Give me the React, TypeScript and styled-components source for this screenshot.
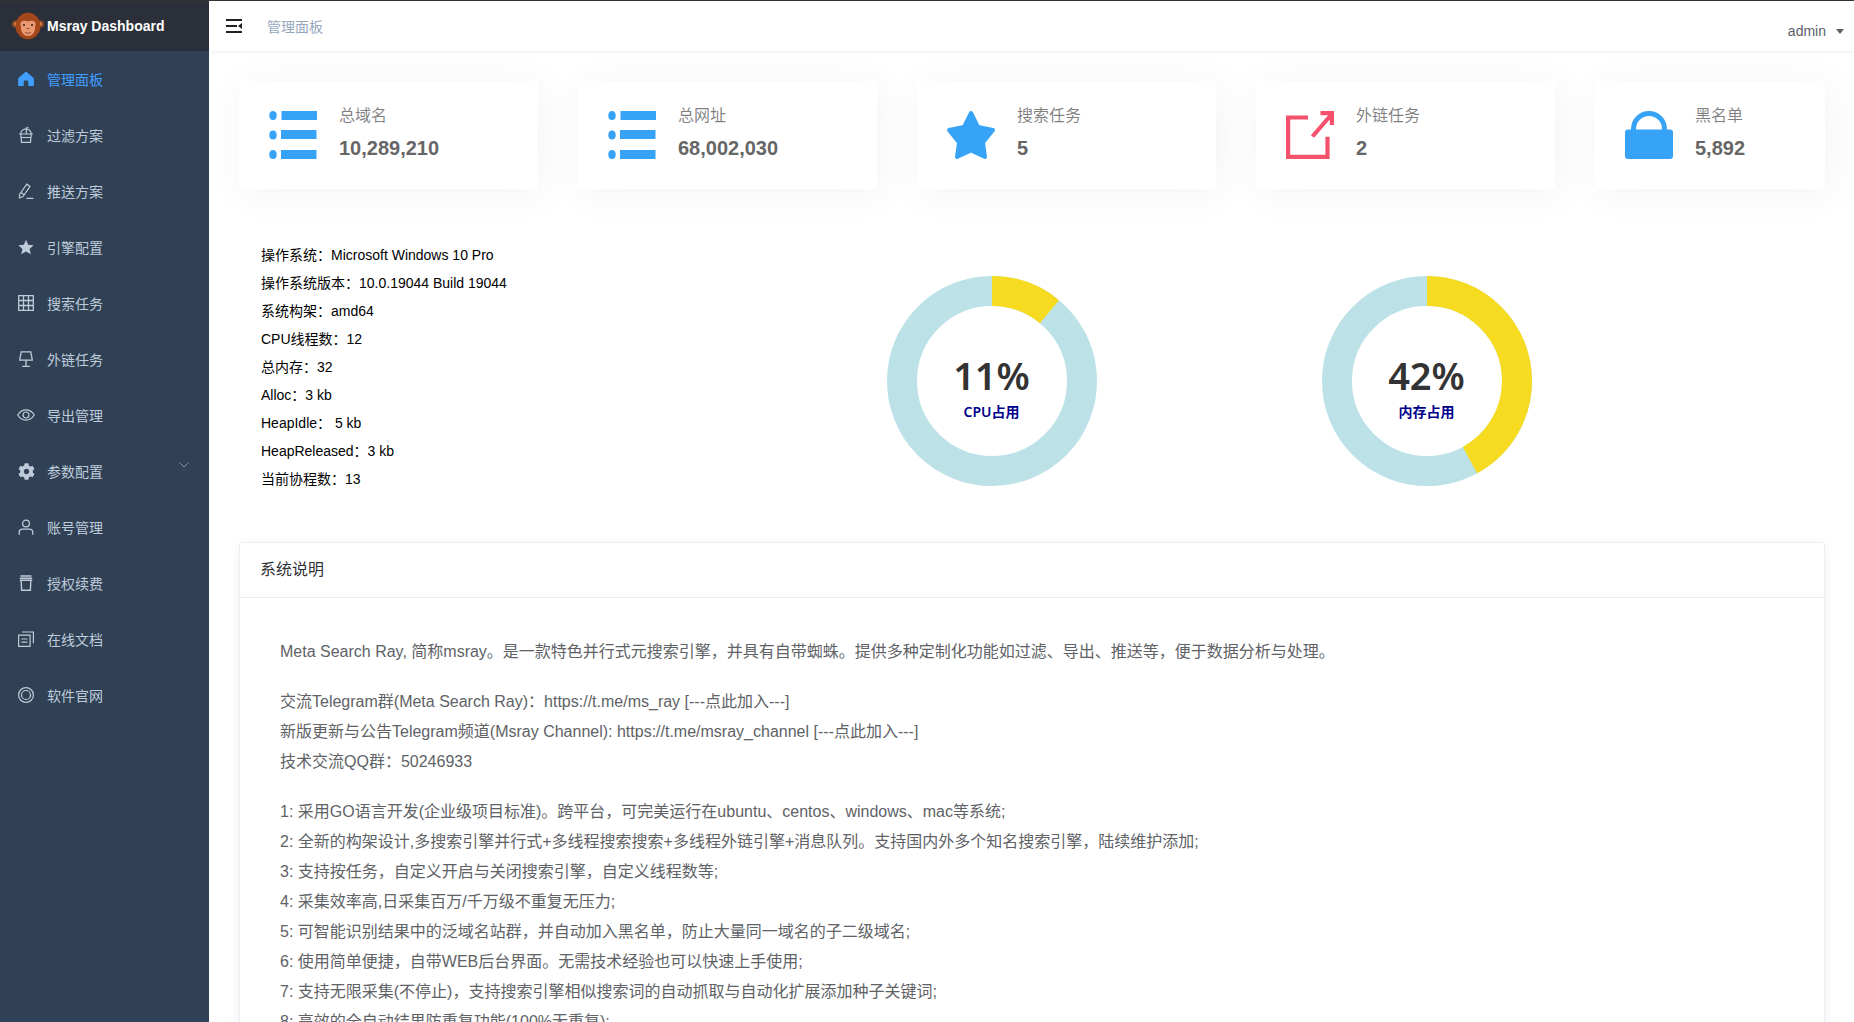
import React from "react";
import styled, { createGlobalStyle } from "styled-components";
import { FaCog } from "react-icons/fa";

const GlobalStyle = createGlobalStyle`
  html, body {
    margin: 0;
    height: 100%;
    overflow: hidden;
    background: #fff;
    font-family: "Liberation Sans", "Noto Sans CJK SC", sans-serif;
  }
  * { box-sizing: border-box; }
`;

// Layout
const Page = styled.div`
  display: flex;
  height: 100vh;
  overflow: hidden;
  border-top: 1px solid #333;
`;

const Sidebar = styled.aside`
  width: 209px;
  flex: none;
  background: #304156;
`;

const LogoBar = styled.div`
  height: 50px;
  display: flex;
  align-items: center;
  gap: 3px;
  padding-left: 12px;
  background: #2b2f3a;
`;

const LogoTitle = styled.span`
  color: #fff;
  font-size: 14px;
  font-weight: 700;
`;

const Menu = styled.nav``;

const MenuItem = styled.div<{ $active?: boolean }>`
  height: 56px;
  display: flex;
  align-items: center;
  gap: 13px;
  padding-left: 18px;
  padding-right: 20px;
  font-size: 14px;
  color: ${(p) => (p.$active ? "#409eff" : "#bfcbd9")};
`;

const MenuIcon = styled.span`
  width: 16px;
  height: 16px;
  display: flex;
  align-items: center;
  justify-content: center;
  color: inherit;
  svg {
    display: block;
    overflow: visible;
  }
`;

const MenuLabel = styled.span`
  flex: 1;
`;

const MenuArrow = styled.svg`
  width: 10px;
  height: 6px;
  margin-top: -13px;
`;

const Main = styled.main`
  flex: 1;
  min-width: 0;
`;

const Header = styled.header`
  height: 50px;
  display: flex;
  align-items: center;
  padding: 0 10px 0 17px;
  background: #fff;
  box-shadow: 0 1px 4px rgba(0, 21, 41, 0.08);
`;

const Crumb = styled.span`
  margin: -1px 0 0 25px;
  flex: 1;
  font-size: 14px;
  color: #97a8be;
`;

const UserName = styled.span`
  margin-top: 10px;
  font-size: 14px;
  color: #5a5e66;
`;

const Caret = styled.span`
  margin: 11px 0 0 10px;
  border-left: 4px solid transparent;
  border-right: 4px solid transparent;
  border-top: 5px solid #5a5e66;
`;

const Content = styled.div`
  padding: 30px 29px 0 30px;
`;

// Stat cards
const CardRow = styled.div`
  display: grid;
  grid-template-columns: repeat(4, 1fr) 230px;
  gap: 40px;
`;

const StatCard = styled.div`
  height: 108px;
  display: flex;
  align-items: center;
  gap: 22px;
  padding-left: 30px;
  background: #fff;
  box-shadow: 4px 4px 40px rgba(0, 0, 0, 0.05);
`;

const StatIcon = styled.svg`
  width: 48px;
  height: 48px;
  flex: none;
  overflow: visible;
`;

const StatText = styled.div`
  padding-bottom: 6px;
`;

const StatLabel = styled.div`
  font-size: 16px;
  line-height: 18px;
  color: rgba(0, 0, 0, 0.5);
  margin-bottom: 13px;
`;

const StatValue = styled.div`
  font-size: 20px;
  line-height: 20px;
  font-weight: 700;
  color: #666;
`;

// System info and charts
const InfoRow = styled.div`
  display: grid;
  grid-template-columns: 535px 435px 435px;
  align-items: start;
  margin: 40px 0 49px;
`;

const InfoList = styled.div`
  padding: 12px 0 0 22px;
`;

const InfoLine = styled.div`
  font-size: 14px;
  line-height: 28px;
  color: #000;
`;

const ChartCell = styled.div`
  display: flex;
  justify-content: center;
  padding-top: 47px;
`;

const Ring = styled.div`
  position: relative;
  width: 210px;
  height: 210px;
  svg {
    display: block;
  }
`;

const RingText = styled.div`
  position: absolute;
  inset: 0;
  display: flex;
  flex-direction: column;
  align-items: center;
  justify-content: center;
  padding-top: 11px;
`;

const RingPercent = styled.div`
  font-family: "Noto Sans", sans-serif;
  font-size: 38px;
  line-height: 46px;
  font-weight: 600;
  color: #333;
`;

const RingLabel = styled.div`
  margin-top: 4px;
  font-family: "Noto Sans", "Noto Sans CJK SC", sans-serif;
  font-size: 14px;
  line-height: 20px;
  font-weight: 600;
  color: #00008b;
`;

// Description panel
const Panel = styled.section`
  background: #fff;
  border: 1px solid #ebeef5;
  border-radius: 4px;
  box-shadow: 0 2px 12px rgba(0, 0, 0, 0.06);
`;

const PanelHead = styled.div`
  height: 55px;
  display: flex;
  align-items: center;
  padding: 0 0 5px 20px;
  border-bottom: 1px solid #ebeef5;
  font-size: 16px;
  color: #303133;
`;

const PanelBody = styled.div`
  padding: 39px 40px 20px;
`;

const Para = styled.p`
  margin: 0 0 20px;
  font-size: 16px;
  line-height: 30px;
  color: #606266;
`;

const menuIcons: Record<string, React.ReactNode> = {
  home: (
    <svg width="16" height="16" viewBox="0 0 16 16" fill="currentColor">
      <path d="M8 .8c.3 0 .5.1.7.3l6.6 5.7c.4.3.6.7.6 1.2V15H10.3v-4.2c0-.7-.5-1.2-1.2-1.2H6.9c-.7 0-1.2.5-1.2 1.2V15H.1V8c0-.5.2-.9.6-1.2l6.6-5.7c.2-.2.4-.3.7-.3z" />
    </svg>
  ),
  jar: (
    <svg width="16" height="16" viewBox="0 0 16 16" fill="none" stroke="currentColor" strokeWidth="1.2">
      <path d="M2.800 7a5.200 5.200 0 0 1 10.400 0M1 7h14M2.800 7l.7 8.300h9L13.200 7M8.300 6.500V1.200l2-.8M3.300 10.500h9.400" />
    </svg>
  ),
  pen: (
    <svg width="16" height="16" viewBox="0 0 16 16" fill="none" stroke="currentColor" strokeWidth="1.2">
      <path d="M1.500 11.500L8.800 1.200l3.200 2.200-7 10.200-3.500 1.200zM3 9.500l3 2.200M8.500 15.400h7" />
    </svg>
  ),
  star: (
    <svg width="16" height="16" viewBox="0 0 16 16" fill="currentColor">
      <path d="M8 .8l2.200 5 5.400.5-4 3.600 1.200 5.300L8 12.400l-4.800 2.800 1.200-5.300-4-3.600 5.400-.5z" />
    </svg>
  ),
  table: (
    <svg width="16" height="16" viewBox="0 0 16 16" fill="none" stroke="currentColor" strokeWidth="1.3">
      <path d="M.7.7h14.600v14.600H.7zM.7 5.500h14.600M.7 10.500h14.600M5.500.7v14.600M10.500.7v14.600" />
    </svg>
  ),
  lamp: (
    <svg width="16" height="16" viewBox="0 0 16 16" fill="none" stroke="currentColor" strokeWidth="1.3">
      <path d="M3.200.9h9.600l1.500 8.300H1.700zM8 9.200v5.800M4.200 15.300h7.600" />
    </svg>
  ),
  eye: (
    <svg width="18" height="16" viewBox="0 0 18 16" fill="none" stroke="currentColor" strokeWidth="1.2">
      <path d="M.7 8C3 4.300 5.800 2.900 9 2.900s6 1.400 8.300 5.100C15 11.700 12.200 13.100 9 13.100S3 11.700.7 8z" />
      <circle cx="9" cy="8" r="3" />
    </svg>
  ),
  gear: <FaCog size={17} />,
  user: (
    <svg width="16" height="16" viewBox="0 0 16 16" fill="none" stroke="currentColor" strokeWidth="1.3">
      <circle cx="8" cy="4.500" r="3.400" />
      <path d="M1.200 15.800v-2.100c0-2 1.500-3.500 3.500-3.500h6.600c2 0 3.500 1.500 3.500 3.500v2.100" />
    </svg>
  ),
  cup: (
    <svg width="16" height="16" viewBox="0 0 16 16" fill="none" stroke="currentColor" strokeWidth="1.4">
      <path d="M2.500 1h11M1.800 3.200h12.400M1.800 5.200h12.400M3.200 5.500l.4 9.800h8.800l.4-9.800" />
    </svg>
  ),
  docs: (
    <svg width="16" height="16" viewBox="0 0 16 16" fill="none" stroke="currentColor" strokeWidth="1.2">
      <path d="M.6 4.200h11.500v11.200H.6zM4 1h11.400v11.300M3.400 8h6M3.400 11.200h6" />
    </svg>
  ),
  ring: (
    <svg width="16" height="16" viewBox="0 0 16 16" fill="none" stroke="currentColor" strokeWidth="1.2">
      <circle cx="8" cy="8" r="7.400" />
      <circle cx="8" cy="8" r="4.500" />
      <path d="M12.500 8v2.200" />
    </svg>
  ),
};

const menu = [
  { label: "管理面板", icon: "home", active: true },
  { label: "过滤方案", icon: "jar" },
  { label: "推送方案", icon: "pen" },
  { label: "引擎配置", icon: "star" },
  { label: "搜索任务", icon: "table" },
  { label: "外链任务", icon: "lamp" },
  { label: "导出管理", icon: "eye" },
  { label: "参数配置", icon: "gear", arrow: true },
  { label: "账号管理", icon: "user" },
  { label: "授权续费", icon: "cup" },
  { label: "在线文档", icon: "docs" },
  { label: "软件官网", icon: "ring" },
];

const MonkeyLogo = () => (
  <svg width="32" height="28" viewBox="0 0 32 28">
    <circle cx="3.500" cy="12" r="3.500" fill="#8f4a22" />
    <circle cx="28.500" cy="12" r="3.500" fill="#8f4a22" />
    <circle cx="3.800" cy="12" r="1.800" fill="#d98a5e" />
    <circle cx="28.200" cy="12" r="1.800" fill="#d98a5e" />
    <ellipse cx="16" cy="14" rx="12.500" ry="13.200" fill="#a4481c" />
    <path d="M8.500 12c0-3 3.500-4 7.500-2.500 4-1.500 7.500-.5 7.500 2.500 0 1.500-.5 2.500-.5 4 0 4.500-3 8-7 8s-7-3.500-7-8c0-1.500-.5-2.500-.5-4z" fill="#e99a74" />
    <circle cx="12" cy="13" r="1" fill="#3a1a0c" />
    <circle cx="20" cy="13" r="1" fill="#3a1a0c" />
    <path d="M14.800 16.500h2.400M13 20.500c2 .8 4 .8 6 0" stroke="#8a3f1e" strokeWidth="0.9" fill="none" />
  </svg>
);

const HamburgerIcon = () => (
  <svg width="16" height="14" viewBox="0 0 16 14" fill="#222">
    <rect width="16" height="2" />
    <rect y="6" width="11" height="2" />
    <rect y="12" width="16" height="2" />
    <path d="M16 4v6l-4-3z" />
  </svg>
);

const ListIcon = () => (
  <StatIcon viewBox="0 0 48 48" fill="#36a3f7">
    <ellipse cx="4" cy="4.500" rx="3.700" ry="4.500" />
    <ellipse cx="4" cy="24" rx="3.700" ry="4.500" />
    <ellipse cx="4" cy="43.500" rx="3.700" ry="4.500" />
    <rect x="12.500" width="35.500" height="9" />
    <rect x="12" y="19" width="35.500" height="9" />
    <rect x="12" y="39" width="35.500" height="9" />
  </StatIcon>
);

const StarIcon = () => (
  <StatIcon viewBox="0 0 48 48" fill="#36a3f7" stroke="#36a3f7" strokeWidth="4" strokeLinejoin="round">
    <path d="M24 2l7 14 15 3-10 12.500L38 46l-14-6.500L10 46l2-14.500L2 19l15-3z" />
  </StatIcon>
);

const ExternalIcon = () => (
  <StatIcon viewBox="0 0 48 48" fill="none" stroke="#f4516c" strokeWidth="4.200">
    <path d="M22 6.500H2.100V45.900H41.500V25.700M26.500 25.500L45 4M34.500 2.100H45.900V14" />
  </StatIcon>
);

const LockIcon = () => (
  <StatIcon viewBox="0 0 48 48" fill="#36a3f7">
    <rect y="18.500" width="48" height="29.500" rx="3" />
    <path d="M8.500 20v-2a15.500 15.500 0 0 1 31 0v2" fill="none" stroke="#36a3f7" strokeWidth="5" />
  </StatIcon>
);

const stats = [
  { label: "总域名", value: "10,289,210", icon: <ListIcon /> },
  { label: "总网址", value: "68,002,030", icon: <ListIcon /> },
  { label: "搜索任务", value: "5", icon: <StarIcon /> },
  { label: "外链任务", value: "2", icon: <ExternalIcon /> },
  { label: "黑名单", value: "5,892", icon: <LockIcon /> },
];

const sysInfo = [
  "操作系统：Microsoft Windows 10 Pro",
  "操作系统版本：10.0.19044 Build 19044",
  "系统构架：amd64",
  "CPU线程数：12",
  "总内存：32",
  "Alloc：3 kb",
  "HeapIdle： 5 kb",
  "HeapReleased：3 kb",
  "当前协程数：13",
];

const features = [
  "1: 采用GO语言开发(企业级项目标准)。跨平台，可完美运行在ubuntu、centos、windows、mac等系统;",
  "2: 全新的构架设计,多搜索引擎并行式+多线程搜索搜索+多线程外链引擎+消息队列。支持国内外多个知名搜索引擎，陆续维护添加;",
  "3: 支持按任务，自定义开启与关闭搜索引擎，自定义线程数等;",
  "4: 采集效率高,日采集百万/千万级不重复无压力;",
  "5: 可智能识别结果中的泛域名站群，并自动加入黑名单，防止大量同一域名的子二级域名;",
  "6: 使用简单便捷，自带WEB后台界面。无需技术经验也可以快速上手使用;",
  "7: 支持无限采集(不停止)，支持搜索引擎相似搜索词的自动抓取与自动化扩展添加种子关键词;",
  "8: 高效的全自动结果防重复功能(100%无重复);",
];

const RING_RADIUS = 90;
const RING_LENGTH = 2 * Math.PI * RING_RADIUS;

const Donut: React.FC<{ percent: number; label: string }> = ({ percent, label }) => (
  <ChartCell>
    <Ring>
      <svg width="210" height="210" viewBox="0 0 210 210" fill="none" strokeWidth="30">
        <circle cx="105" cy="105" r={RING_RADIUS} stroke="#bce2e8" />
        <circle
          cx="105"
          cy="105"
          r={RING_RADIUS}
          stroke="#f6db20"
          strokeDasharray={`${(RING_LENGTH * percent) / 100} ${RING_LENGTH}`}
          transform="rotate(-90 105 105)"
        />
      </svg>
      <RingText>
        <RingPercent>{percent}%</RingPercent>
        <RingLabel>{label}</RingLabel>
      </RingText>
    </Ring>
  </ChartCell>
);

const App: React.FC = () => (
  <Page>
    <GlobalStyle />
    <Sidebar>
      <LogoBar>
        <MonkeyLogo />
        <LogoTitle>Msray Dashboard</LogoTitle>
      </LogoBar>
      <Menu>
        {menu.map((item) => (
          <MenuItem key={item.label} $active={item.active}>
            <MenuIcon>{menuIcons[item.icon]}</MenuIcon>
            <MenuLabel>{item.label}</MenuLabel>
            {item.arrow && (
              <MenuArrow viewBox="0 0 10 6" fill="none" stroke="#909399">
                <path d="M.5.5L5 5 9.500.5" />
              </MenuArrow>
            )}
          </MenuItem>
        ))}
      </Menu>
    </Sidebar>
    <Main>
      <Header>
        <HamburgerIcon />
        <Crumb>管理面板</Crumb>
        <UserName>admin</UserName>
        <Caret />
      </Header>
      <Content>
        <CardRow>
          {stats.map((s) => (
            <StatCard key={s.label}>
              {s.icon}
              <StatText>
                <StatLabel>{s.label}</StatLabel>
                <StatValue>{s.value}</StatValue>
              </StatText>
            </StatCard>
          ))}
        </CardRow>
        <InfoRow>
          <InfoList>
            {sysInfo.map((line) => (
              <InfoLine key={line}>{line}</InfoLine>
            ))}
          </InfoList>
          <Donut percent={11} label="CPU占用" />
          <Donut percent={42} label="内存占用" />
        </InfoRow>
        <Panel>
          <PanelHead>系统说明</PanelHead>
          <PanelBody>
            <Para>
              Meta Search Ray, 简称msray。是一款特色并行式元搜索引擎，并具有自带蜘蛛。提供多种定制化功能如过滤、导出、推送等，便于数据分析与处理。
            </Para>
            <Para>
              交流Telegram群(Meta Search Ray)：https://t.me/ms_ray [---点此加入---]
              <br />
              新版更新与公告Telegram频道(Msray Channel): https://t.me/msray_channel [---点此加入---]
              <br />
              技术交流QQ群：50246933
            </Para>
            <Para>
              {features.map((line) => (
                <React.Fragment key={line}>
                  {line}
                  <br />
                </React.Fragment>
              ))}
            </Para>
          </PanelBody>
        </Panel>
      </Content>
    </Main>
  </Page>
);

export default App;
